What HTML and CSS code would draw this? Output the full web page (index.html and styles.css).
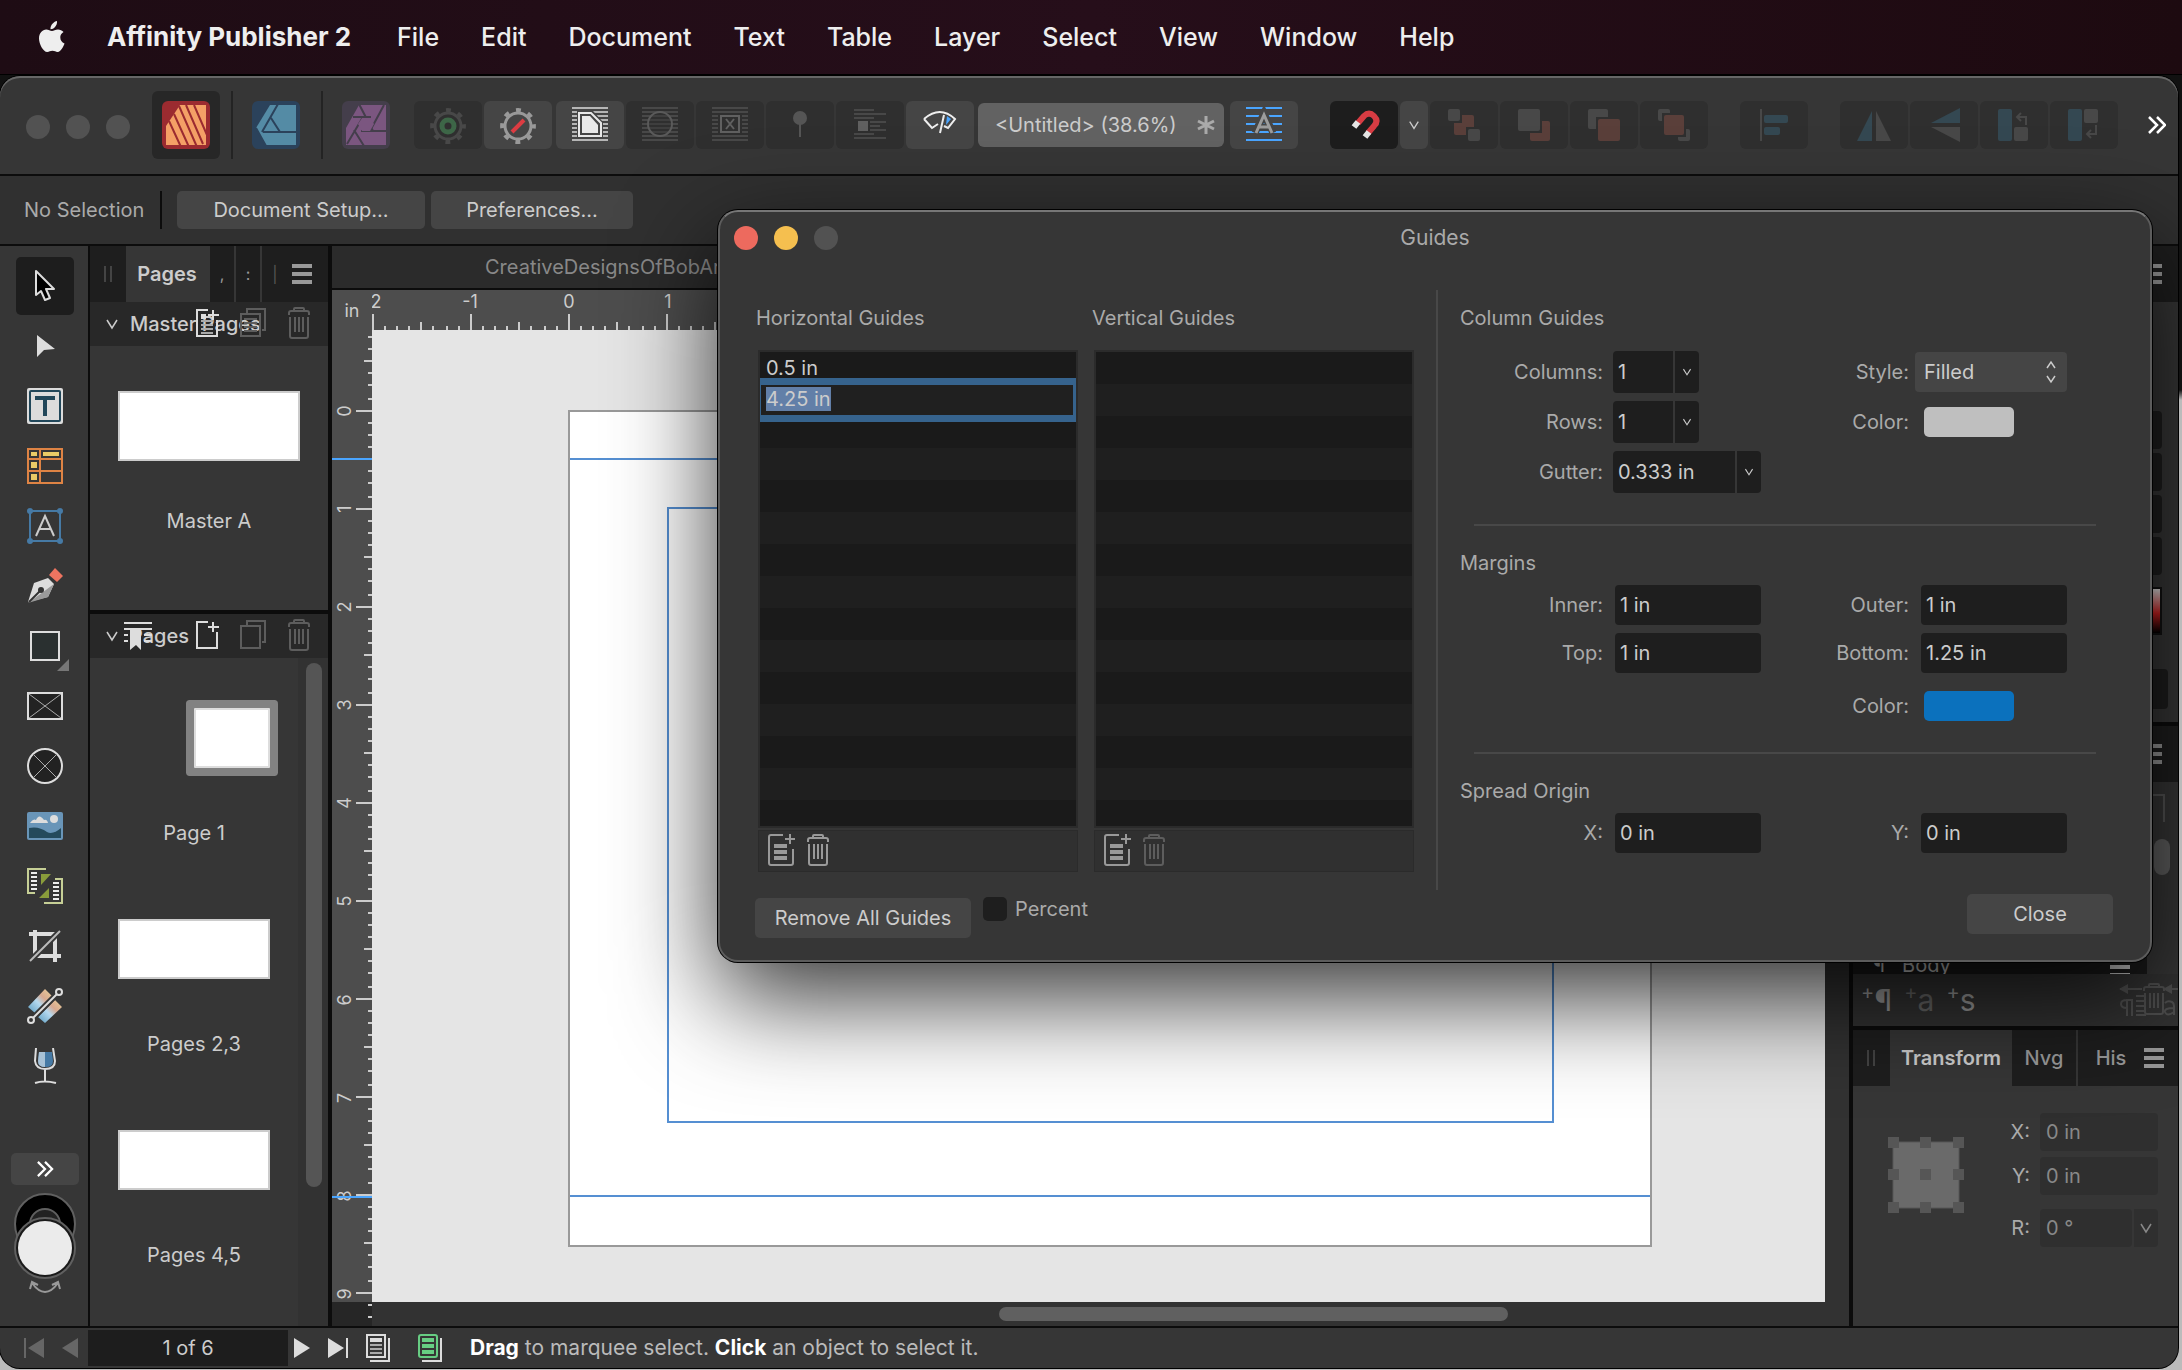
FILE: index.html
```html
<!DOCTYPE html>
<html lang="en">
<head>
    <meta charset="UTF-8">
    <meta name="viewport" content="width=device-width, initial-scale=1.0">
    <title>Affinity Publisher 2</title>
    <link rel="stylesheet" href="styles.css">
</head>
<body>
    <!-- Shared icons -->
    <svg class="sprite" aria-hidden="true">
        <defs>
            <symbol id="chevron" viewBox="0 0 14 14"><path d="M2 3l5 8 5-8" fill="none" stroke="currentColor" stroke-width="1.5"/></symbol>
            <symbol id="menu" viewBox="0 0 20 20"><path d="M0 2h20M0 10h20M0 18h20" stroke="currentColor" stroke-width="4"/></symbol>
            <symbol id="more" viewBox="0 0 18 18"><path d="M1 1l8 8-8 8M9 1l8 8-8 8" fill="none" stroke="currentColor" stroke-width="2.5"/></symbol>
            <symbol id="grip" viewBox="0 0 8 16"><path d="M1 0v16M7 0v16" stroke="currentColor" stroke-width="2"/></symbol>
            <symbol id="trash" viewBox="0 0 28 36"><g fill="none" stroke="currentColor" stroke-width="2"><path d="M4 9V7q0-2 2-2h16q2 0 2 2v2M9 5V3q0-1 1-1h8q1 0 1 1v2M5 11v19q0 2 2 2h14q2 0 2-2V11M10 11v15M14 11v15M18 11v15"/></g></symbol>
            <symbol id="copy" viewBox="0 0 28 36"><g fill="none" stroke="currentColor" stroke-width="2"><path d="M2 8h19v22H2zM8 7V3h18v21h-3"/></g></symbol>
            <symbol id="new-page" viewBox="0 0 28 36"><g fill="none" stroke="currentColor" stroke-width="2"><path d="M15 4H4v26h20V14M20 4v10M15 9h11"/></g></symbol>
            <symbol id="new-guide" viewBox="0 0 28 36"><g fill="none" stroke="currentColor" stroke-width="2"><path d="M16 2H4q-2 0-2 2v26q0 2 2 2h20q2 0 2-2V16M23 1v10M18 6h10"/><path d="M7 13h13M7 19h13M7 25h13" stroke-width="4"/></g></symbol>
            <symbol id="gear" viewBox="0 0 48 48"><circle cx="24" cy="25" r="13" fill="none" stroke="currentColor" stroke-width="3"/><circle cx="24" cy="25" r="15.900" fill="none" stroke="currentColor" stroke-width="4" stroke-dasharray="5 7.480" stroke-dashoffset="-10"/></symbol>
            <symbol id="lines" viewBox="0 0 48 48"><path d="M6 7h36M6 11h36M6 15h36M6 19h36M6 23h36M6 27h36M6 31h36M6 35h36M6 39h36" stroke="currentColor" stroke-width="2"/></symbol>
        </defs>
    </svg>

    <nav class="menubar">
        <svg class="apple" viewBox="0 0 26 32"><path d="M18 0c.3 2.500-.7 4.500-2 6-1.300 1.500-3 2.300-4.500 2.200C11.200 6 12.300 4 13.500 2.700 14.800 1.200 16.700.2 18 0zM24.500 11c-2.300 1.500-3.300 3.300-3.200 5.500 0 2.800 1.500 4.800 4.200 6-1 3-3.700 8.300-6.800 8.500-2 .1-2.800-1.200-5.200-1.200s-3.300 1.200-5.200 1.200C4 31 0 22.500 0 17.500 0 12 3.500 8.500 7.200 8.500c2.300 0 4 1.400 5.800 1.400 1.700 0 3.300-1.500 6-1.500 2 0 4.200 1 5.500 2.600z" fill="#eee"/></svg>
        <a href="#" class="app-name">Affinity Publisher 2</a>
        <a href="#">File</a>
        <a href="#">Edit</a>
        <a href="#">Document</a>
        <a href="#">Text</a>
        <a href="#">Table</a>
        <a href="#">Layer</a>
        <a href="#">Select</a>
        <a href="#">View</a>
        <a href="#">Window</a>
        <a href="#">Help</a>
    </nav>

    <div class="window">
        <header class="toolbar">
            <div class="lights"><i></i><i></i><i></i></div>
            <button class="persona active" aria-label="Publisher"><svg viewBox="0 0 48 48"><rect width="48" height="48" rx="6" fill="#9b2b30"/><path d="M4 44V25L18 4h26v40z" fill="#f4a066"/><path d="M7 20l12 26M12 13l15 33M17 5l18 41M24 4l17 39M32 4l13 30" stroke="#9b2b30" stroke-width="2"/></svg></button>
            <span class="rule"></span>
            <button class="persona" aria-label="Designer"><svg viewBox="0 0 48 48"><rect width="48" height="48" rx="6" fill="#2b425b"/><path d="M4 27L18 4h26v40H13z" fill="#548ba5"/><path d="M26 3L10 31M4 27l10 18M11 31h34M19 17l9 14" fill="none" stroke="#2b425b" stroke-width="2"/></svg></button>
            <span class="rule"></span>
            <button class="persona" aria-label="Photo"><svg viewBox="0 0 48 48"><rect width="48" height="48" rx="6" fill="#443e4b"/><path d="M4 44V27L17 4h27v40z" fill="#7b5680"/><path d="M17 3l14 27M42 4L28 30M11 16h18M45 30H19M21 16L5 43M12 29l10 16" fill="none" stroke="#443e4b" stroke-width="2"/><path d="M20 17h8l4 6-4 7h-8l-4-7z" fill="#7b5680"/></svg></button>

            <div class="tool-group first">
                <button class="tb off" aria-label="Preflight"><svg viewBox="0 0 48 48"><use href="#gear" width="48" height="48"/><circle cx="24" cy="25" r="6" fill="none" stroke="#3d6647" stroke-width="5"/></svg></button>
                <button class="tb" aria-label="Preflight off"><svg viewBox="0 0 48 48" color="#999"><use href="#gear" width="48" height="48"/><path d="M18 31L30 19" stroke="#dc3c42" stroke-width="4"/></svg></button>
                <button class="tb gap" aria-label="Show text wrap"><svg viewBox="0 0 48 48" color="#b5b5b5"><use href="#lines" width="48" height="48"/><path d="M11 10h16l10 11v16H11z" fill="#454545"/><path d="M13 12h12l10 10v13H13z" fill="none" stroke="#e8e8e8" stroke-width="2"/><path d="M16 15h8l8 9v8H16z" fill="#e8e8e8"/></svg></button>
                <button class="tb off" aria-label="Wrap round"><svg viewBox="0 0 48 48"><use href="#lines" width="48" height="48"/><circle cx="24" cy="23" r="12" fill="#2f2f2f" fill-opacity=".4" stroke="#5a5a5a" stroke-width="2"/></svg></button>
                <button class="tb off" aria-label="Wrap box"><svg viewBox="0 0 48 48"><use href="#lines" width="48" height="48"/><path d="M12 13h24v20H12z" fill="#2f2f2f"/><path d="M15 15h18v16H15zM20 18l8 10M28 18l-8 10" fill="none" stroke="#606060" stroke-width="2"/></svg></button>
                <button class="tb off" aria-label="Pin"><svg viewBox="0 0 48 48"><circle cx="24" cy="17" r="7" fill="#555"/><path d="M24 17v19" stroke="#555" stroke-width="2"/></svg></button>
                <button class="tb off" aria-label="Inline pin"><svg viewBox="0 0 48 48"><path d="M8 9h20M8 13h32M8 17h20M24 21h16M24 25h10M24 29h16M8 33h20M8 37h32" stroke="currentColor" stroke-width="2"/><path d="M12 20h10v10H12z" fill="#606060"/></svg></button>
                <button class="tb" aria-label="Preview"><svg viewBox="0 0 48 48" fill="none"><path d="M8 18q16-14 31 0l-7 9-4-2M8 18l8 9 6-4" stroke="#eee" stroke-width="2"/><path d="M28 14l-4 18" stroke="#eee" stroke-width="2"/><path d="M31 15l4 3-5 6z" fill="#4aa5ff"/></svg></button>
            </div>
            <button class="doc-title">&lt;Untitled&gt; (38.6%)<svg width="18" height="20"><path d="M9 1v18M1 6l16 8M17 6L1 14" stroke="#aaa" stroke-width="3"/></svg></button>
            <button class="tb" aria-label="Baseline grid"><svg viewBox="0 0 48 48"><path d="M6 7h36M6 15h36M6 23h36M6 31h36M6 39h36" stroke="#4aa5ff" stroke-width="2"/><path d="M15 32L24 12l9 20M18 26h12" fill="none" stroke="#454545" stroke-width="7"/><path d="M16 32l8-18 8 18M19 26h10" fill="none" stroke="#9c9c9c" stroke-width="3"/></svg></button>
            <div class="tool-group snap">
                <button class="tb dark" aria-label="Snapping"><svg viewBox="0 0 48 48" fill="none"><path d="M18 22l6-7q5-5 10 0t0 10l-6 7" stroke="#d73c43" stroke-width="6"/><path d="M18 21l-4 5M29 31l-4 5" stroke="#e5e5e5" stroke-width="6"/></svg></button>
                <button class="tb slim" aria-label="Snapping options"><svg viewBox="0 0 14 14"><use href="#chevron"/></svg></button>
                <button class="tb off" aria-label="Move to back"><svg viewBox="0 0 48 48"><rect x="14" y="14" width="20" height="20" rx="2" fill="#5a3f3a"/><path d="M6 6h16v16H6zM26 26h16v16H26z" fill="#2f2f2f"/><rect x="8" y="8" width="12" height="12" rx="2" fill="#484848"/><rect x="28" y="28" width="12" height="12" rx="2" fill="#484848"/></svg></button>
                <button class="tb off" aria-label="Move back one"><svg viewBox="0 0 48 48"><rect x="20" y="20" width="20" height="20" rx="2" fill="#5a3f3a"/><path d="M6 6h26v26H6z" fill="#2f2f2f"/><rect x="8" y="8" width="22" height="22" rx="2" fill="#484848"/></svg></button>
                <button class="tb off" aria-label="Move forward one"><svg viewBox="0 0 48 48"><rect x="8" y="8" width="20" height="20" rx="2" fill="#484848"/><path d="M16 16h26v26H16z" fill="#2f2f2f"/><rect x="18" y="18" width="22" height="22" rx="2" fill="#5a3f3a"/></svg></button>
                <button class="tb off" aria-label="Move to front"><svg viewBox="0 0 48 48"><rect x="8" y="8" width="12" height="12" rx="2" fill="#484848"/><rect x="28" y="28" width="12" height="12" rx="2" fill="#484848"/><path d="M12 12h24v24H12z" fill="#2f2f2f"/><rect x="14" y="14" width="20" height="20" rx="2" fill="#5a3f3a"/></svg></button>
            </div>
            <button class="tb off align" aria-label="Align"><svg viewBox="0 0 48 48"><path d="M11 8v32" stroke="#484848" stroke-width="2"/><rect x="14" y="14" width="24" height="8" rx="2" fill="#344852"/><rect x="14" y="26" width="16" height="8" rx="2" fill="#344852"/></svg></button>
            <div class="tool-group flips">
                <button class="tb off" aria-label="Flip horizontal"><svg viewBox="0 0 48 48"><path d="M22 10v30H7z" fill="#344852"/><path d="M26 10v30h15z" fill="#484848"/></svg></button>
                <button class="tb off" aria-label="Flip vertical"><svg viewBox="0 0 48 48"><path d="M40 7v15H11z" fill="#344852"/><path d="M40 26v15L11 26z" fill="#484848"/></svg></button>
                <button class="tb off" aria-label="Rotate left"><svg viewBox="0 0 48 48"><rect x="8" y="8" width="14" height="32" rx="2" fill="#344852"/><rect x="24" y="26" width="14" height="14" rx="2" fill="#484848"/><path d="M36 24v-8h-9M31 12l-4 4 4 4" fill="none" stroke="#484848" stroke-width="2"/></svg></button>
                <button class="tb off" aria-label="Rotate right"><svg viewBox="0 0 48 48"><rect x="8" y="8" width="14" height="32" rx="2" fill="#344852"/><rect x="24" y="8" width="14" height="14" rx="2" fill="#484848"/><path d="M36 24v9h-9M31 29l-4 4 4 4" fill="none" stroke="#484848" stroke-width="2"/></svg></button>
            </div>
            <button class="more" aria-label="More"><svg width="18" height="18"><use href="#more"/></svg></button>
        </header>

        <div class="context">
            <span>No Selection</span>
            <button class="btn setup">Document Setup...</button>
            <button class="btn prefs">Preferences...</button>
        </div>

        <main class="workspace">
            <!-- Tools -->
            <aside class="tools">
                <button class="tool active" aria-label="Move"><svg viewBox="0 0 36 36"><path d="M9 3v24l5-4 4 9 5-2-4-9h8z" fill="#000" stroke="#ddd" stroke-width="2" stroke-linejoin="round"/></svg></button>
                <button class="tool" aria-label="Node"><svg viewBox="0 0 36 36"><path d="M10 7v22l7-7 11-1z" fill="#ddd"/></svg></button>
                <button class="tool" aria-label="Frame text"><svg viewBox="0 0 36 36"><rect width="36" height="36" rx="2" fill="#dcdcdc"/><rect x="3" y="3" width="30" height="30" rx="1" fill="none" stroke="#21475a" stroke-width="2"/><path d="M8 10h20M18 10v18" stroke="#21475a" stroke-width="4"/></svg></button>
                <button class="tool" aria-label="Table"><svg viewBox="0 0 36 36"><path d="M1 1h34v34H1zM1 11h34M1 23h34M13 1v34" fill="none" stroke="#de8344" stroke-width="2"/><path d="M4 4h6v4H4zM16 4h16v4H16zM4 14h6v6H4zM4 26h6v6H4z" fill="#eacb66"/></svg></button>
                <button class="tool" aria-label="Artistic text"><svg viewBox="0 0 36 36"><path d="M3 3h30v30H3z" fill="none" stroke="#467aa5" stroke-width="2"/><g fill="#467aa5"><circle cx="3" cy="3" r="3"/><circle cx="33" cy="3" r="3"/><circle cx="3" cy="33" r="3"/><circle cx="33" cy="33" r="3"/></g><path d="M9 28l9-20 9 20M12 21h12" fill="none" stroke="#ccc" stroke-width="2"/></svg></button>
                <button class="tool" aria-label="Pen"><svg viewBox="0 0 36 36"><path d="M1 34L7 15l14-5 6 6-6 13z" fill="#ddd"/><path d="M1 35l26-19-6 13z" fill="#9a9a9a"/><path d="M2 34l11-11" stroke="#333" stroke-width="2"/><circle cx="14" cy="22" r="3" fill="#333"/><path d="M22 7l6-7 8 8-6 6z" fill="#ee7460"/></svg></button>
                <button class="tool" aria-label="Rectangle"><svg viewBox="0 0 36 36"><path d="M4 4h28v28H4z" fill="#2a3030" stroke="#ddd" stroke-width="2"/></svg><i class="flyout"></i></button>
                <button class="tool" aria-label="Picture frame rectangle"><svg viewBox="0 0 36 36"><path d="M1 5h34v26H1z" fill="#222" stroke="#ddd" stroke-width="2"/><path d="M2 6l32 24M34 6L2 30" stroke="#aaa"/></svg></button>
                <button class="tool" aria-label="Picture frame ellipse"><svg viewBox="0 0 36 36"><circle cx="18" cy="18" r="17" fill="#222" stroke="#ddd" stroke-width="2"/><path d="M6 6l24 24M30 6L6 30" stroke="#aaa"/></svg></button>
                <button class="tool" aria-label="Place image"><svg viewBox="0 0 36 36"><rect y="4" width="36" height="28" rx="2" fill="#6995b8"/><path d="M2 30V20q10-2 18 4 6 3 14-4v10z" fill="#244a5c"/><circle cx="27" cy="11" r="4" fill="#ddd"/><path d="M3 15q3-5 6-3 3-7 8 0 3-1 4 3z" fill="#ddd"/></svg></button>
                <button class="tool" aria-label="Data merge"><svg viewBox="0 0 36 36"><path d="M19 1H1v24h7M28 11h7v24H17" fill="none" stroke="#c6cf96" stroke-width="2"/><path d="M4 5h6M4 9h6M4 13h6M4 17h6M4 21h6M26 15h6M26 19h6M26 23h6M26 27h6M26 31h6" stroke="#eee" stroke-width="2"/><path d="M14 6h10L14 17zM22 20v10H12z" fill="#8a9c3b"/></svg></button>
                <button class="tool" aria-label="Crop"><svg viewBox="0 0 36 36"><path d="M2 6h26v28M8 2v26h26" fill="none" stroke="#ddd" stroke-width="4"/><path d="M3 33L33 3" stroke="#363636" stroke-width="6"/><path d="M3 33L33 3" stroke="#bbb" stroke-width="2"/></svg></button>
                <button class="tool" aria-label="Fill"><svg viewBox="0 0 36 36"><defs><linearGradient id="fill" x1="0" y1="1" x2="1" y2="0"><stop stop-color="#2f7da8"/><stop offset=".45" stop-color="#b5d9ef"/><stop offset=".6" stop-color="#d9a98f"/><stop offset="1" stop-color="#f1e69f"/></linearGradient></defs><path d="M1 19L18 1l7 7L8 25zM11 29l17-17 7 7-17 16z" fill="url(#fill)"/><path d="M5 31L31 5" stroke="#363636" stroke-width="6"/><path d="M6 30L30 6" stroke="#ddd" stroke-width="2"/><g fill="#363636" stroke="#ddd" stroke-width="2"><circle cx="4" cy="32" r="3"/><circle cx="32" cy="4" r="3"/></g></svg></button>
                <button class="tool" aria-label="Transparency"><svg viewBox="0 0 36 36"><path d="M12 4h13l1 9q0 6-7 6-8 0-8-6z" fill="#467aa5"/><path d="M12 4h6v15q-7 0-7-6z" fill="#a8c2d6"/><path d="M9 0L8 13q1 8 10 8 10 0 10-8L26 0M18 21v13M8 35q9-3 21 0" fill="none" stroke="#ddd" stroke-width="2"/></svg></button>
                <button class="tools-more" aria-label="More tools"><svg width="18" height="16"><use href="#more"/></svg></button>
                <svg class="wells" viewBox="0 0 62 102"><circle cx="31" cy="31" r="30" fill="#000" stroke="#606060" stroke-width="2"/><circle cx="31" cy="31" r="15" fill="#222" stroke="#606060" stroke-width="2"/><circle cx="31" cy="55" r="30" fill="#1a1a1a" stroke="#606060" stroke-width="2"/><circle cx="31" cy="55" r="27" fill="#ebebeb"/><path d="M18 90q13 18 26 0M16 96l2-7 6 3M46 96l-2-7-6 3" fill="none" stroke="#999" stroke-width="2"/></svg>
            </aside>

            <!-- Pages panel -->
            <aside class="pages">
                <div class="tabs">
                    <svg class="grip" width="8" height="16"><use href="#grip"/></svg>
                    <button class="tab on">Pages</button>
                    <span class="stub">,</span><span class="stub">:</span><span class="stub last">|</span>
                    <button class="menu" aria-label="Panel menu"><svg width="20" height="20"><use href="#menu"/></svg></button>
                </div>
                <div class="section-head">
                    <svg width="14" height="14"><use href="#chevron"/></svg>
                    <h2>Master Pages</h2>
                    <button aria-label="Add master"><svg width="28" height="36"><use href="#new-page"/><path d="M8 15h12M8 19h12M8 23h12M8 27h12" stroke="#aaa" stroke-width="2"/><path d="M8 8h5v5H8z" fill="#ddd"/></svg></button>
                    <button class="dim" aria-label="Duplicate master"><svg width="28" height="36"><use href="#copy"/><path d="M5 13h13M5 17h13M5 21h13M5 25h13" stroke="currentColor" stroke-width="2"/></svg></button>
                    <button class="dim" aria-label="Delete master"><svg width="28" height="36"><use href="#trash"/></svg></button>
                </div>
                <div class="masters">
                    <div class="thumb master"></div>
                    <p>Master A</p>
                </div>
                <div class="section-head">
                    <svg width="14" height="14"><use href="#chevron"/></svg>
                    <h2>Pages</h2>
                    <svg class="bookmark" width="28" height="28" viewBox="0 0 28 28"><path d="M0 1h28M0 7h28M0 13h4M0 19h4M20 13h8M20 19h8" stroke="#ddd" stroke-width="2"/><path d="M6 7h11v21l-5-5-6 5z" fill="#ddd"/></svg>
                    <button aria-label="Add pages"><svg width="28" height="36"><use href="#new-page"/></svg></button>
                    <button class="dim" aria-label="Duplicate page"><svg width="28" height="36"><use href="#copy"/></svg></button>
                    <button class="dim" aria-label="Delete page"><svg width="28" height="36"><use href="#trash"/></svg></button>
                </div>
                <div class="page-list">
                    <div class="spreads">
                        <div class="spread"><div class="thumb single"></div><p>Page 1</p></div>
                        <div class="spread"><div class="thumb"></div><p>Pages 2,3</p></div>
                        <div class="spread"><div class="thumb"></div><p>Pages 4,5</p></div>
                    </div>
                    <div class="track"><i></i></div>
                </div>
            </aside>

            <!-- Document view -->
            <section class="document">
                <div class="doc-tab">CreativeDesignsOfBobArthur</div>
                <div class="unit">in</div>
                <svg class="ruler-h">
                    <defs><pattern id="ticks-h" width="98" height="40" patternUnits="userSpaceOnUse"><path d="M1 24v16M13 36v4M25 36v4M37 36v4M49 32v8M61 36v4M75 36v4M87 36v4" stroke="#ccc" stroke-width="2"/></pattern></defs>
                    <rect width="100%" height="40" fill="url(#ticks-h)"/>
                    <text x="4" y="18">2</text><text x="98" y="18">-1</text><text x="197" y="18">0</text><text x="296" y="18">1</text>
                </svg>
                <svg class="ruler-v">
                    <defs><pattern id="ticks-v" y="80" width="40" height="98" patternUnits="userSpaceOnUse"><path d="M24 1h16M36 13h4M36 25h4M36 37h4M32 49h8M36 61h4M36 73h4M36 87h4" stroke="#ccc" stroke-width="2"/></pattern></defs>
                    <rect y="972" width="40" height="100" fill="#262626"/>
                    <rect width="40" height="100%" fill="url(#ticks-v)"/>
                    <g>
                        <text transform="translate(19 81) rotate(-90)">0</text>
                        <text transform="translate(19 179) rotate(-90)">1</text>
                        <text transform="translate(19 277) rotate(-90)">2</text>
                        <text transform="translate(19 375) rotate(-90)">3</text>
                        <text transform="translate(19 473) rotate(-90)">4</text>
                        <text transform="translate(19 571) rotate(-90)">5</text>
                        <text transform="translate(19 670) rotate(-90)">6</text>
                        <text transform="translate(19 768) rotate(-90)">7</text>
                        <text transform="translate(19 866) rotate(-90)">8</text>
                        <text transform="translate(19 964) rotate(-90)">9</text>
                    </g>
                    <path d="M0 129h40M0 867h40" stroke="#4aa5ff" stroke-width="2"/>
                </svg>
                <div class="canvas">
                    <div class="sheet">
                        <i class="margin"></i>
                        <i class="guide top"></i>
                        <i class="guide bottom"></i>
                    </div>
                </div>
                <div class="vscroll"></div>
                <div class="hscroll"><i></i></div>
            </section>

            <!-- Right studio -->
            <aside class="studio">
                <section class="color-panel">
                    <div class="tabs"><button class="menu" aria-label="Colour panel menu"><svg width="20" height="20"><use href="#menu"/></svg></button></div>
                    <div class="sliders"><i></i><i></i><i></i><i></i><i class="spectrum"></i><i class="opacity"></i></div>
                </section>
                <section class="style-panel">
                    <div class="tabs"><button class="menu" aria-label="Style panel menu"><svg width="20" height="20"><use href="#menu"/></svg></button></div>
                    <div class="style-list"><i class="list-frame"></i><i class="list-thumb"></i><div class="style-row"><span>¶</span><span>Body</span><svg width="20" height="20"><use href="#menu"/></svg></div></div>
                    <div class="style-actions">
                        <button aria-label="New paragraph style"><sup>+</sup>¶</button>
                        <button class="dim" aria-label="New character style"><sup>+</sup>a</button>
                        <button aria-label="New style"><sup>+</sup>s</button>
                        <svg class="style-icons" width="60" height="36" viewBox="0 0 60 36" fill="none" stroke="#505050" stroke-width="2"><path d="M2 7h22M46 7h14"/><path d="M1 7l9-5v10zM45 7l9-5v10z" fill="#505050" stroke="none"/><path d="M9 34V18h5v16M9 18q-6 0-6 4t6 4M18 14h10M18 19h8M18 24h8M18 29h8M18 33h10"/><use href="#trash" x="22" y="0" width="28" height="36" color="#505050"/><path d="M47 21q3-3 7-1 2 1 2 4v9M56 26q-10 0-9 4 2 5 9 0"/></svg>
                    </div>
                </section>
                <section class="transform-panel">
                    <div class="tabs">
                        <svg class="grip" width="8" height="16"><use href="#grip"/></svg>
                        <button class="tab on">Transform</button>
                        <button class="tab">Nvg</button>
                        <button class="tab last">His</button>
                        <button class="menu" aria-label="Transform panel menu"><svg width="20" height="20"><use href="#menu"/></svg></button>
                    </div>
                    <div class="transform">
                        <svg class="anchor" viewBox="0 0 76 76"><path d="M5 5h66v66H5z" fill="#6a6a6a" stroke="#565656"/><path d="M0 0h11v11H0zM32 0h11v11H32zM65 0h11v11H65zM0 32h11v11H0zM32 32h11v11H32zM65 32h11v11H65zM0 65h11v11H0zM32 65h11v11H32zM65 65h11v11H65z" fill="#565656"/></svg>
                        <div class="transform-fields">
                            <label for="tx">X:</label><input id="tx" value="0 in" disabled>
                            <label for="ty">Y:</label><input id="ty" value="0 in" disabled>
                            <label for="tr" class="rot">R:</label><span class="combo rot"><input id="tr" value="0 °" disabled><button disabled aria-label="Angles"><svg width="14" height="14"><use href="#chevron"/></svg></button></span>
                        </div>
                    </div>
                </section>
            </aside>
        </main>

        <footer class="status">
            <button class="dim" aria-label="First page"><svg width="20" height="20"><path d="M0 0h2v20H0zM20 0v20L4 10z" fill="currentColor"/></svg></button>
            <button class="dim" aria-label="Previous page"><svg width="16" height="20"><path d="M16 0v20L0 10z" fill="currentColor"/></svg></button>
            <input class="page-no" aria-label="Page" value="1 of 6">
            <button class="next" aria-label="Next page"><svg width="16" height="20"><path d="M0 0v20l16-10z" fill="currentColor"/></svg></button>
            <button aria-label="Last page"><svg width="20" height="20"><path d="M0 0v20l16-10zM18 0h2v20h-2z" fill="currentColor"/></svg></button>
            <button class="facing" aria-label="Spreads"><svg width="24" height="28" viewBox="0 0 24 28" fill="none"><path d="M1 1h18v22H1zM23 4v23H4" stroke="#ddd" stroke-width="2"/><path d="M4 6h12" stroke="#ddd" stroke-width="4"/><path d="M4 11h12M4 15h12M4 19h12" stroke="#aaa" stroke-width="2"/></svg></button>
            <button class="preflight" aria-label="Preflight status"><svg width="24" height="28" viewBox="0 0 24 28" fill="none"><path d="M23 4v23H4" stroke="#ddd" stroke-width="2"/><rect x="1" y="1" width="18" height="22" rx="2" stroke="#67cd83" stroke-width="2"/><path d="M4 6h12M4 12h12M4 18h12" stroke="#67cd83" stroke-width="4"/></svg></button>
            <p><b>Drag</b> to marquee select. <b>Click</b> an object to select it.</p>
        </footer>

        <!-- Guides dialog -->
        <div class="dialog" role="dialog" aria-labelledby="guides-title">
            <div class="dialog-bar">
                <div class="lights"><i class="red"></i><i class="yellow"></i><i></i></div>
                <h1 id="guides-title">Guides</h1>
            </div>
            <div class="dialog-body">
                <div class="guide-col">
                    <h2>Horizontal Guides</h2>
                    <ul>
                        <li>0.5 in</li>
                        <li><input id="guide-edit" class="guide-edit" aria-label="Guide position" value="4.25 in"></li>
                    </ul>
                    <div class="guide-tools">
                        <button aria-label="Add horizontal guide"><svg width="28" height="36"><use href="#new-guide"/></svg></button>
                        <button aria-label="Remove horizontal guide"><svg width="28" height="36"><use href="#trash"/></svg></button>
                    </div>
                </div>
                <div class="guide-col">
                    <h2>Vertical Guides</h2>
                    <ul></ul>
                    <div class="guide-tools">
                        <button aria-label="Add vertical guide"><svg width="28" height="36"><use href="#new-guide"/></svg></button>
                        <button class="dim" aria-label="Remove vertical guide"><svg width="28" height="36"><use href="#trash"/></svg></button>
                    </div>
                </div>
                <div class="settings">
                    <h2>Column Guides</h2>
                    <div class="fields columns">
                        <label for="columns">Columns:</label>
                        <span class="combo short"><input id="columns" value="1"><button aria-label="Column presets"><svg width="10" height="14"><use href="#chevron"/></svg></button></span>
                        <label for="style">Style:</label>
                        <span class="picker"><select id="style"><option>Filled</option></select><svg width="12" height="24" viewBox="0 0 12 24"><path d="M2 8l4-6 4 6M2 16l4 6 4-6" fill="none" stroke="#ccc" stroke-width="1.500"/></svg></span>
                        <label for="rows">Rows:</label>
                        <span class="combo short"><input id="rows" value="1"><button aria-label="Row presets"><svg width="10" height="14"><use href="#chevron"/></svg></button></span>
                        <label for="fill-color">Color:</label>
                        <button id="fill-color" class="swatch grey"></button>
                        <label for="gutter">Gutter:</label>
                        <span class="combo"><input id="gutter" value="0.333 in"><button aria-label="Gutter presets"><svg width="10" height="14"><use href="#chevron"/></svg></button></span>
                    </div>
                    <hr>
                    <h2>Margins</h2>
                    <div class="fields">
                        <label for="inner">Inner:</label><input id="inner" value="1 in">
                        <label for="outer">Outer:</label><input id="outer" value="1 in">
                        <label for="top">Top:</label><input id="top" value="1 in">
                        <label for="bottom">Bottom:</label><input id="bottom" value="1.25 in">
                        <label for="margin-color" class="third">Color:</label>
                        <button id="margin-color" class="swatch blue"></button>
                    </div>
                    <hr>
                    <h2>Spread Origin</h2>
                    <div class="fields">
                        <label for="origin-x">X:</label><input id="origin-x" value="0 in">
                        <label for="origin-y">Y:</label><input id="origin-y" value="0 in">
                    </div>
                </div>
            </div>
            <div class="dialog-foot">
                <button class="btn remove">Remove All Guides</button>
                <label class="percent"><input type="checkbox">Percent</label>
                <button class="btn close">Close</button>
            </div>
        </div>
    </div>

    <script>
        // The second guide is being edited
        document.getElementById('guide-edit').select();
    </script>
</body>
</html>
```
FILE: styles.css
```css
* {
    box-sizing: border-box;
}
body {
    margin: 0;
    height: 100vh;
    display: flex;
    flex-direction: column;
    overflow: hidden;
    background: linear-gradient(#111 0 390px, #bbb 400px);
    color: #ccc;
    font: 20px/24px Inter, "Liberation Sans", sans-serif;
}
h1, h2, p, ul {
    margin: 0;
    padding: 0;
    font-size: 20px;
    font-weight: 400;
}
button, input, select {
    font: inherit;
    color: inherit;
    border: 0;
    padding: 0;
    margin: 0;
    background: none;
    border-radius: 0;
    outline: none;
}
button {
    display: flex;
    align-items: center;
    justify-content: center;
    flex: none;
}
svg {
    display: block;
    flex: none;
}
.sprite {
    position: absolute;
    width: 0;
    height: 0;
}

/* Menu bar */
.menubar {
    flex: none;
    height: 75px;
    display: flex;
    align-items: center;
    gap: 42px;
    padding-left: 39px;
    background: linear-gradient(90deg, #1e0c14, #260e1a 50%, #1d0a10);
    border-bottom: 1px solid #000;
}
.menubar a {
    color: #eee;
    text-decoration: none;
    font-size: 25px;
    font-weight: 500;
    white-space: nowrap;
}
.menubar .app-name {
    margin-right: 4px;
    font-size: 26px;
    font-weight: 700;
}
.apple {
    width: 26px;
    height: 32px;
}

/* Window */
.window {
    position: relative;
    flex: 1;
    min-height: 0;
    display: flex;
    flex-direction: column;
    margin: 1px 4px 2px 0;
    background: #363636;
    border-radius: 20px;
    overflow: hidden;
    box-shadow: inset 0 2px #666, 0 0 0 1px #000;
}
.toolbar {
    flex: none;
    height: 100px;
    display: flex;
    align-items: center;
    padding: 0 12px 0 26px;
    border-bottom: 2px solid #0c0c0c;
}
.lights {
    display: flex;
    gap: 16px;
}
.lights i {
    width: 24px;
    height: 24px;
    border-radius: 50%;
    background: #525252;
}
.lights .red {
    background: #ed6a5e;
}
.lights .yellow {
    background: #f5bf4f;
}
.toolbar .lights {
    margin: 4px 22px 0 0;
}
.persona {
    width: 68px;
    height: 68px;
    border-radius: 6px;
    margin-right: 11px;
}
.persona.active {
    background: #272727;
}
.persona svg {
    width: 48px;
    height: 48px;
}
.rule {
    width: 2px;
    height: 68px;
    margin-right: 9px;
    background: #232323;
}
.tool-group {
    display: flex;
    gap: 2px;
}
.tool-group.first {
    margin-left: 3px;
}
.tb {
    width: 68px;
    height: 48px;
    border-radius: 6px;
    background: #454545;
    color: #ccc;
}
.tb svg {
    width: 48px;
    height: 48px;
}
.tb.gap {
    margin-left: 2px;
}
.tb.off {
    background: #2f2f2f;
    color: #484848;
}
.tb.dark {
    background: #1d1d1d;
}
.tb.slim {
    width: 28px;
}
.tb.slim svg {
    width: 12px;
    height: 14px;
}
.doc-title {
    width: 246px;
    height: 44px;
    margin: 0 6px 0 4px;
    padding: 0 9px 0 17px;
    border-radius: 6px;
    background: #626262;
    justify-content: space-between;
    white-space: nowrap;
}
.snap, .align, .flips {
    margin-left: 32px;
}
.more {
    margin-left: auto;
    color: #fff;
}

/* Context bar */
.context {
    flex: none;
    height: 70px;
    display: flex;
    align-items: center;
    background: #303030;
    border-bottom: 2px solid #0c0c0c;
    padding-left: 24px;
    color: #aaa;
}
.context span {
    width: 138px;
    line-height: 38px;
    border-right: 2px solid #0c0c0c;
    white-space: nowrap;
}
.btn {
    height: 40px;
    border-radius: 5px;
    background: #454545;
    color: #ccc;
    white-space: nowrap;
}
.context .btn {
    height: 38px;
    margin-left: 6px;
}
.context .setup {
    width: 248px;
    margin-left: 15px;
}
.context .prefs {
    width: 202px;
}

/* Workspace */
.workspace {
    flex: 1;
    min-height: 0;
    display: flex;
}
.tools {
    flex: none;
    width: 90px;
    border-right: 2px solid #0c0c0c;
    padding: 11px 0 0 2px;
    display: flex;
    flex-direction: column;
    align-items: center;
    gap: 2px;
}
.tool {
    position: relative;
    width: 58px;
    height: 58px;
    border-radius: 5px;
}
.tool.active {
    background: #1d1d1d;
}
.tool svg {
    width: 36px;
    height: 36px;
}
.flyout {
    position: absolute;
    right: 5px;
    bottom: 4px;
    border: 6px solid #777;
    border-top-color: transparent;
    border-left-color: transparent;
}
.tools-more {
    width: 68px;
    height: 32px;
    margin: 56px 0 6px;
    border-radius: 5px;
    background: #454545;
    color: #fff;
}
.wells {
    width: 62px;
    height: 102px;
}

/* Panels */
.pages {
    flex: none;
    width: 242px;
    border-right: 4px solid #0c0c0c;
    display: flex;
    flex-direction: column;
}
.tabs {
    flex: none;
    height: 56px;
    display: flex;
    align-items: stretch;
    background: #1e1e1e;
    color: #999;
}
.grip {
    margin: 20px 14px;
    color: #444;
}
.tab {
    width: 66px;
    font-weight: 500;
    border-right: 2px solid #363636;
}
.tab.on {
    width: 84px;
    background: #363636;
    color: #ccc;
    font-weight: 600;
}
.stub {
    width: 26px;
    line-height: 56px;
    text-align: center;
    font-size: 16px;
    border-right: 2px solid #363636;
}
.stub.last {
    border: 0;
    color: #555;
}
.menu {
    margin-left: auto;
    margin-right: 16px;
    color: #999;
}
.section-head {
    position: relative;
    flex: none;
    height: 44px;
    display: flex;
    align-items: center;
    padding: 0 6px 0 15px;
    background: #282828;
}
.section-head h2 {
    flex: 1;
    width: 0;
    margin-left: 11px;
    white-space: nowrap;
    font-weight: 500;
}
.section-head button {
    width: 46px;
    z-index: 1;
    color: #ddd;
}
.section-head .dim, .guide-tools .dim {
    color: #5d5d5d;
}
.bookmark {
    position: absolute;
    left: 34px;
    top: 8px;
}
.masters {
    flex: none;
    height: 268px;
    padding-top: 45px;
    border-bottom: 4px solid #0c0c0c;
    text-align: center;
}
.thumb {
    width: 152px;
    height: 60px;
    background: #fff;
    border: 2px solid #ccc;
}
.thumb.master {
    width: 182px;
    height: 70px;
    margin: 0 auto 48px;
}
.page-list {
    flex: 1;
    min-height: 0;
    display: flex;
}
.spreads {
    flex: 1;
    padding: 50px 28px 0;
    text-align: center;
}
.spread {
    height: 211px;
}
.spread .thumb {
    margin-bottom: 53px;
}
.thumb.single {
    width: 76px;
    margin-left: 76px;
    border-color: #ddd;
    border-radius: 1px;
    box-shadow: 0 0 0 8px #828282;
}
.track {
    width: 30px;
    padding: 5px 6px 0 8px;
    background: #323232;
}
.track i {
    display: block;
    height: 524px;
    border-radius: 8px;
    background: #555;
}

/* Document */
.document {
    flex: 1;
    min-width: 0;
    display: grid;
    grid-template-columns: 40px 1fr 24px;
    grid-template-rows: 44px 40px 1fr 24px;
    background: #4d4d4d;
}
.doc-tab {
    grid-column: 1 / -1;
    padding-left: 153px;
    line-height: 42px;
    background: #2b2b2b;
    border-bottom: 2px solid #0c0c0c;
    color: #888;
}
.unit {
    text-align: center;
    padding-top: 10px;
    font-size: 18px;
    line-height: 22px;
}
.ruler-h {
    grid-column: 2 / -1;
    width: 100%;
    height: 40px;
    overflow: hidden;
}
.ruler-h text, .ruler-v text {
    fill: #ccc;
    font-size: 18px;
    text-anchor: middle;
}
.ruler-v {
    grid-row: 3 / 5;
    width: 40px;
    height: 100%;
}
.canvas {
    position: relative;
    overflow: hidden;
    background: #e5e5e5;
}
.vscroll, .hscroll {
    background: #323232;
}
.hscroll {
    grid-column: 2 / -1;
    padding: 5px 0 0 627px;
}
.hscroll i {
    display: block;
    width: 509px;
    height: 14px;
    border-radius: 7px;
    background: #606060;
}
.sheet {
    position: absolute;
    left: 196px;
    top: 80px;
    width: 1084px;
    height: 837px;
    background: #fff;
    border: 2px solid #999;
}
.margin {
    position: absolute;
    inset: 95px 96px 122px 97px;
    border: 2px solid #558fd2;
}
.guide {
    position: absolute;
    left: 0;
    right: 0;
    height: 2px;
    background: #558fd2;
}
.guide.top {
    top: 46px;
}
.guide.bottom {
    bottom: 48px;
}

/* Studio */
.studio {
    flex: none;
    width: 329px;
    border-left: 4px solid #0c0c0c;
    display: flex;
    flex-direction: column;
}
.color-panel {
    height: 480px;
    border-bottom: 4px solid #0c0c0c;
}
.sliders {
    padding: 109px 16px 0;
    display: flex;
    flex-direction: column;
    gap: 4px;
}
.sliders i {
    height: 38px;
    border-radius: 4px;
    background: #1e1e1e;
}
.sliders .spectrum {
    height: 48px;
    margin-top: 8px;
    border: 2px solid #111;
    border-radius: 0;
    background: linear-gradient(#ddd, #c22 55%, #000);
}
.sliders .opacity {
    height: 40px;
    margin: 30px -6px 0 0;
}
.style-panel {
    height: 304px;
    display: flex;
    flex-direction: column;
    border-bottom: 4px solid #0c0c0c;
}
.style-list {
    flex: 1;
    position: relative;
}
.list-frame {
    position: absolute;
    inset: 12px 13px auto 13px;
    height: 28px;
    border: 2px solid #555;
    border-bottom: 0;
}
.list-thumb {
    position: absolute;
    right: 8px;
    top: 57px;
    width: 16px;
    height: 36px;
    border-radius: 8px;
    background: #606060;
}
.style-row {
    position: absolute;
    left: 0;
    right: 31px;
    bottom: 0;
    height: 40px;
    overflow: hidden;
    display: flex;
    align-items: flex-end;
    gap: 17px;
    padding: 0 17px 0 20px;
    background: #1a1a1a;
}
.style-row span {
    line-height: 18px;
}
.style-row svg {
    margin: 0 0 -11px auto;
}
.style-actions {
    height: 52px;
    display: flex;
    align-items: center;
    padding: 0 0 0 8px;
    gap: 12px;
    background: #323232;
}
.style-actions button {
    font-size: 30px;
    color: #999;
}
.style-actions .dim {
    color: #666;
}
.style-actions sup {
    font-size: 20px;
    line-height: 20px;
    align-self: flex-start;
    margin-top: -6px;
}
.style-icons {
    margin-left: auto;
}
.transform-panel {
    flex: 1;
}
.transform-panel .tab.on {
    width: 122px;
    border: 0;
}
.tab.last {
    border: 0;
}
.transform-panel .grip {
    margin-right: 15px;
}
.transform {
    display: flex;
    align-items: flex-start;
    padding: 27px 20px 0 35px;
}
.anchor {
    width: 76px;
    height: 76px;
    margin-top: 24px;
}
.transform-fields {
    flex: 1;
    display: grid;
    grid-template-columns: 1fr 118px;
    gap: 6px 10px;
    align-items: center;
    text-align: right;
    color: #aaa;
}
.transform-fields input {
    width: 118px;
    height: 38px;
    padding-left: 6px;
    border-radius: 4px;
    background: #2f2f2f;
    color: #888;
}
.transform-fields .rot {
    margin-top: 8px;
}
.transform-fields .combo input {
    flex: 1;
    width: 0;
}
.transform-fields .combo button {
    background: #2f2f2f;
    color: #888;
}

/* Status bar */
.status {
    flex: none;
    height: 42px;
    display: flex;
    align-items: center;
    border-top: 2px solid #0c0c0c;
    padding-left: 24px;
    color: #ddd;
}
.status .dim {
    margin-right: 18px;
    color: #666;
}
.status .dim + .dim {
    margin-right: 10px;
}
.page-no {
    width: 200px;
    height: 36px;
    background: #1d1d1d;
    text-align: center;
    color: #ccc;
}
.next {
    margin: 0 18px 0 6px;
}
.facing {
    margin: 0 28px 0 18px;
}
.preflight {
    margin-right: 28px;
}
.status p {
    color: #bbb;
    font-size: 21px;
    white-space: nowrap;
}
.status b {
    color: #fff;
}

/* Guides dialog */
.dialog {
    position: absolute;
    top: 134px;
    right: 26px;
    width: 1434px;
    height: 752px;
    display: flex;
    flex-direction: column;
    background: #363636;
    border: 2px solid #5c5c5c;
    border-top-color: #777;
    border-radius: 20px;
    box-shadow: 0 0 0 1px #000, 0 36px 100px rgba(0, 0, 0, 0.8);
    color: #aaa;
}
.dialog-bar {
    height: 52px;
    display: flex;
    align-items: center;
    padding-left: 14px;
}
.dialog-bar h1 {
    flex: 1;
    padding-right: 118px;
    text-align: center;
    font-size: 21px;
}
.dialog-body {
    height: 600px;
    margin-top: 26px;
    padding-left: 38px;
    display: flex;
    gap: 16px;
}
.guide-col {
    width: 320px;
}
.guide-col h2 {
    margin-left: -2px;
    padding: 16px 0 20px;
}
.guide-col ul {
    height: 478px;
    border: 2px solid #2b2b2b;
    background: repeating-linear-gradient(#1a1a1a 0 32px, #1f1f1f 32px 64px);
    list-style: none;
    color: #ccc;
}
.guide-col li {
    position: relative;
    height: 32px;
    line-height: 32px;
    padding-left: 6px;
}
.guide-edit {
    position: absolute;
    left: 0;
    top: -6px;
    width: 100%;
    height: 44px;
    padding: 0 0 2px 5px;
    background: #202020;
    border: 7px solid #36638d;
    border-width: 7px 3px 7px 1px;
    color: #ccc;
}
.guide-edit::selection {
    background: #627fa8;
    color: #ccc;
}
.guide-tools {
    height: 42px;
    margin-top: 2px;
    padding-left: 8px;
    display: flex;
    gap: 9px;
    background: #303030;
    border: 1px solid #2b2b2b;
    color: #999;
}
.settings {
    flex: 1;
    margin-left: 6px;
    padding-left: 23px;
    border-left: 2px solid #484848;
}
.settings h2 {
    margin-left: -1px;
    padding: 25px 0 10px;
}
.settings h2:first-child {
    padding: 16px 0 21px;
}
.settings hr {
    width: 622px;
    height: 2px;
    margin: 31px 0 0 13px;
    border: 0;
    background: #484848;
}
.fields {
    display: grid;
    grid-template-columns: 142px 158px 148px 158px;
    grid-auto-rows: 40px;
    row-gap: 8px;
    align-items: center;
}
.fields.columns {
    grid-auto-rows: 42px;
}
.fields label {
    text-align: right;
}
.fields input {
    justify-self: end;
    width: 146px;
    height: 40px;
    padding-left: 5px;
    border-radius: 4px;
    background: #1e1e1e;
    color: #ccc;
}
.combo {
    display: flex;
    gap: 2px;
}
.fields .combo {
    padding-left: 10px;
}
.fields .combo input {
    flex: 1;
    width: 0;
    height: 42px;
    border-radius: 4px 0 0 4px;
}
.combo button {
    width: 24px;
    border-radius: 0 4px 4px 0;
    background: #1e1e1e;
    color: #ccc;
}
.combo.short {
    width: 96px;
}
.picker {
    position: relative;
    justify-self: end;
}
.picker select {
    width: 152px;
    height: 40px;
    padding-left: 9px;
    appearance: none;
    border-radius: 4px;
    background: #454545;
    color: #ccc;
}
.picker svg {
    position: absolute;
    right: 10px;
    top: 8px;
}
.swatch {
    width: 90px;
    height: 30px;
    margin-left: 15px;
    border-radius: 5px;
}
.swatch.grey {
    background: #bfbfbf;
}
.swatch.blue {
    background: #0b71bd;
    align-self: end;
}
.fields .third {
    grid-column: 3;
    align-self: end;
    line-height: 30px;
}
.dialog-foot {
    display: flex;
    align-items: flex-start;
    padding: 2px 37px 0 35px;
}
.remove {
    width: 216px;
    margin-top: 6px;
}
.percent {
    display: flex;
    align-items: center;
    gap: 8px;
    margin: 5px 0 0 12px;
}
.percent input {
    appearance: none;
    width: 24px;
    height: 24px;
    border-radius: 5px;
    background: #1e1e1e;
}
.close {
    width: 146px;
    margin: 2px 0 0 auto;
}
```
